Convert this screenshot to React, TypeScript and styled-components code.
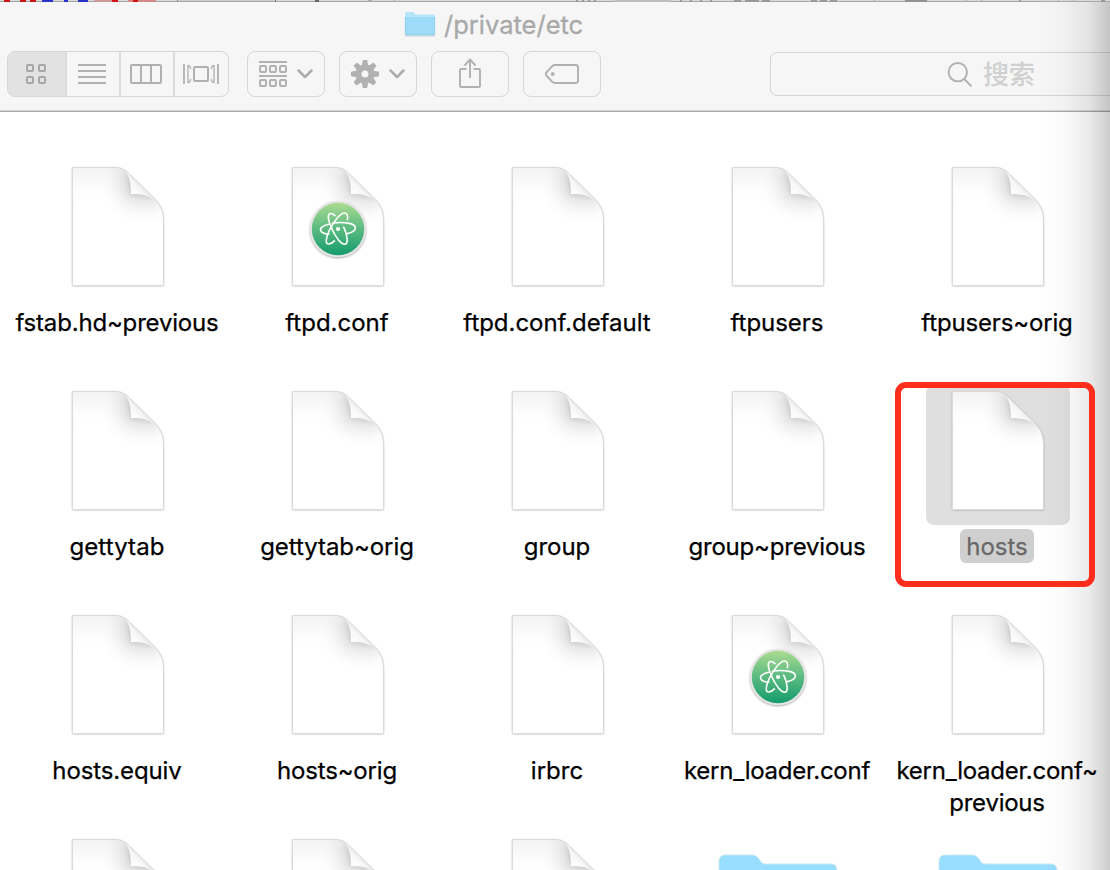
import React from 'react';
import styled, { createGlobalStyle } from 'styled-components';

const GlobalStyle = createGlobalStyle`
  * { box-sizing: border-box; }
  body { margin: 0; background: #fff; overflow: hidden; }
  svg { display: block; flex: none; }
`;

const Window = styled.main`
  position: relative;
  width: 1110px;
  height: 870px;
  overflow: hidden;
  background: #fff;
  font-family: Inter, 'Noto Sans CJK SC', sans-serif;
`;

const EdgeShade = styled.div`
  position: absolute;
  top: 2px;
  right: 0;
  bottom: 0;
  width: 70px;
  pointer-events: none;
  background: linear-gradient(to right, rgba(0, 0, 0, 0), rgba(0, 0, 0, 0.02) 35%, rgba(0, 0, 0, 0.08) 70%, rgba(0, 0, 0, 0.2));
`;

const Header = styled.header`
  height: 110px;
  background: #f6f6f6;
  border-bottom: 1px solid #a9a9a9;
  box-shadow: inset 0 -1px 0 #d4d4d4;
`;

const TitleBar = styled.div`
  display: flex;
  align-items: center;
  height: 43px;
  padding: 1px 0 0 404px;
  gap: 8px;
`;

const Title = styled.h1`
  margin: 2px 0 0;
  font-size: 25.5px;
  font-weight: 400;
  line-height: 42px;
  letter-spacing: 0;
  color: #a9a9a9;
  -webkit-text-stroke: 0.3px #a9a9a9;
  white-space: nowrap;
`;

const Toolbar = styled.div`
  display: flex;
  align-items: flex-start;
  padding: 6px 0 0 7px;
`;

const Segments = styled.div`
  display: flex;
  flex: none;
  width: 222px;
  height: 46px;
  margin-right: 18px;
  border: 1px solid #d6d6d6;
  border-radius: 8px;
  overflow: hidden;
`;

const Segment = styled.div<{ $width: number; $active?: boolean }>`
  display: flex;
  align-items: center;
  justify-content: center;
  flex: none;
  width: ${p => p.$width}px;
  padding-right: 2px;
  background: ${p => (p.$active ? '#e2e2e2' : 'transparent')};
  & + & { border-left: 2px solid #dcdcdc; padding-right: 2px; }
  & + &:last-child { padding: 0 0 0 2px; }
`;

const ToolButton = styled.div`
  display: flex;
  align-items: center;
  justify-content: center;
  flex: none;
  width: 78px;
  height: 46px;
  margin-right: 14px;
  border: 1px solid #d6d6d6;
  border-radius: 8px;
`;

const SearchField = styled.div`
  display: flex;
  align-items: center;
  gap: 10px;
  width: 360px;
  height: 44px;
  margin: 1px 0 0 155px;
  padding-left: 176px;
  border: 1px solid #d4d4d4;
  border-radius: 7px;
  flex: none;
  font-size: 26px;
  line-height: 38px;
  font-weight: 500;
  color: #d0d0d0;
`;

const SearchLabel = styled.span`
  margin-top: 1px;
`;

const Files = styled.section`
  display: grid;
  grid-template-columns: repeat(5, 220px);
  grid-auto-rows: 224px;
  padding: 49px 0 0 7px;
`;

const File = styled.article`
  display: flex;
  flex-direction: column;
  align-items: center;
`;

const Thumb = styled.div<{ $selected?: boolean }>`
  display: flex;
  justify-content: center;
  width: 144px;
  height: 140px;
  margin-left: 2px;
  padding-top: 4px;
  border-radius: 8px;
  background: ${p => (p.$selected ? '#dfdfdf' : 'transparent')};
`;

const Name = styled.div<{ $selected?: boolean; $spacing: number }>`
  margin-top: 4px;
  padding: 2px 6px 0;
  border-radius: 6px;
  font-size: 24px;
  font-weight: 400;
  line-height: 32px;
  text-align: center;
  white-space: pre;
  letter-spacing: ${p => p.$spacing}px;
  color: ${p => (p.$selected ? '#686868' : '#000')};
  -webkit-text-stroke: 0.25px currentColor;
  background: ${p => (p.$selected ? '#cfcfcf' : 'transparent')};
`;

const Highlight = styled.div`
  position: absolute;
  left: 895px;
  top: 382px;
  width: 200px;
  height: 205px;
  border: 6px solid #ff2d1c;
  border-radius: 11px;
`;

const Gap = styled.span`
  width: 10px;
`;

const FolderSpot = styled.div`
  margin-top: 16px;
`;

const PAPER = 'M2.5 2.5H44C52 2.5 55 5 58.5 8.5L85 34.5C91 40.5 93.5 47 93.5 56V120.5H2.5Z';
const CURL = 'M53 4.5C60 10 61 19 61 29C72 29 81 30.5 88 38L85 34.5L58.5 8.5Z';

const Defs = () => (
  <svg width="0" height="0" style={{ position: 'absolute' }}>
    <defs>
      <clipPath id="paper">
        <path d={PAPER} />
      </clipPath>
      <linearGradient id="sheen" x1="0" y1="0" x2="0" y2="1">
        <stop offset="0" stopColor="#f3f3f3" />
        <stop offset=".17" stopColor="#fcfcfc" />
        <stop offset=".3" stopColor="#fff" />
      </linearGradient>
      <linearGradient id="curl" x1="61" y1="29" x2="71" y2="19" gradientUnits="userSpaceOnUse">
        <stop offset="0" stopColor="#fff" />
        <stop offset=".6" stopColor="#f8f8f8" />
        <stop offset="1" stopColor="#ececec" />
      </linearGradient>
      <linearGradient id="atom" x1="0" y1="0" x2="0" y2="1">
        <stop offset="0" stopColor="#acdb91" />
        <stop offset=".45" stopColor="#62bd83" />
        <stop offset="1" stopColor="#149b6c" />
      </linearGradient>
      <filter id="wide" x="-100%" y="-100%" width="300%" height="300%" colorInterpolationFilters="sRGB"><feGaussianBlur stdDeviation="9" /></filter>
      <filter id="tight" x="-50%" y="-50%" width="200%" height="200%" colorInterpolationFilters="sRGB"><feGaussianBlur stdDeviation="3.2" /></filter>
      <filter id="drop" x="-10%" y="-10%" width="120%" height="120%"><feGaussianBlur stdDeviation="1" /></filter>
    </defs>
  </svg>
);

const Paper = ({ atom }: { atom?: boolean }) => (
  <svg width="96" height="124" viewBox="0 0 96 124">
    <path d={PAPER} transform="translate(0 .6)" fill="#000" opacity=".32" filter="url(#drop)" />
    <path d={PAPER} fill="url(#sheen)" />
    <g clipPath="url(#paper)">
      <path d={CURL} fill="#000" stroke="#000" strokeWidth="20" opacity=".12" filter="url(#wide)" />
      <path d={CURL} fill="#000" opacity=".17" filter="url(#tight)" />
    </g>
    <path d={CURL} fill="url(#curl)" />
    <path d={PAPER} fill="none" stroke="#dadada" strokeWidth="1" />
    {atom && (
      <g transform="translate(48 64)">
        <circle cy="1.2" r="28" fill="#000" opacity=".35" filter="url(#drop)" />
        <circle r="28.3" fill="#e5e5e6" />
        <circle r="26.2" fill="url(#atom)" />
        <g fill="none" stroke="#fff" strokeWidth="1.6" strokeLinecap="round">
          <path d="M-9.2 -4.7C-15 -3.5 -18.3 -1 -17.3 1.6C-16.3 4 -12.5 5 -9.3 5.3M-5.5 -5.8C5 -7.5 18.3 -6 17.3 -.7C16.8 1.8 13.5 3.6 9.5 4.6" />
          <path d="M-5.8 .5C-8.8 -6 -11.8 -14 -7.6 -15.4C-6.2 -15.8 -4.5 -14.8 -3.1 -13.4M-5.8 .5C-2.5 8 3.6 16 7.3 15.2C10.5 14.2 9.3 5.5 5.7 -1.8" />
          <path d="M9.4 -9.3C10 -13 9.3 -15.6 7 -16C2.8 -17 -4.8 -7 -8.7 1.5C-12 8.8 -13 14.5 -9.8 15C-7.5 15.2 -5.3 13.8 -3.6 11.9" />
        </g>
        <circle r="2.1" fill="#fff" />
      </g>
    )}
  </svg>
);

const Folder = () => (
  <svg width="122" height="104" viewBox="0 0 122 104">
    <path d="M2 9Q2 2 8 2H35Q39 2 41 5L45 10Q46 11 49 11H114Q120 11 120 18V96Q120 100 116 100H6Q2 100 2 96Z" fill="#98deff" stroke="#c9e7f3" strokeWidth="1" />
    <path d="M2 17H120V98H2Z" fill="#7acbf7" />
  </svg>
);

const TitleFolder = () => (
  <svg width="32" height="28" viewBox="0 0 32 28">
    <path d="M1 25.8H31" stroke="#cbd4d8" strokeWidth="1.5" />
    <path d="M1 3.5Q1 2 2.5 2H8.5Q9.5 2 10.5 3.2L11.5 4.5H29.5Q31 4.5 31 6V24Q31 25.3 29.5 25.3H2.5Q1 25.3 1 24Z" fill="#b6e5fa" />
    <path d="M1 7H31V24Q31 25 30 25H2Q1 25 1 24Z" fill="#9edbf8" />
    <path d="M1.3 7V24.5H30.7V7" fill="none" stroke="#8dcce9" strokeWidth=".8" />
  </svg>
);

const Chevron = () => (
  <svg width="16" height="10" viewBox="0 0 16 10"><path d="M1.5 1.5L8 8L14.5 1.5" fill="none" stroke="#acacac" strokeWidth="2.5" strokeLinecap="round" strokeLinejoin="round" /></svg>
);

const GridIcon = () => (
  <svg width="20" height="20" viewBox="0 0 20 20" fill="none" stroke="#a6a6a6" strokeWidth="2">
    {[1, 13].map(x => [1, 13].map(y => <rect key={`${x}-${y}`} x={x} y={y} width="6" height="6" rx="1" />))}
  </svg>
);

const ListIcon = () => (
  <svg width="28" height="20" viewBox="0 0 28 20"><path d="M0 1H28M0 7H28M0 13H28M0 19H28" stroke="#b1b1b1" strokeWidth="2" /></svg>
);

const ColumnsIcon = () => (
  <svg width="32" height="20" viewBox="0 0 32 20" fill="none" stroke="#b1b1b1" strokeWidth="2"><rect x="1" y="1" width="30" height="18" rx="1" /><path d="M11 1V19M21 1V19" /></svg>
);

const CoverIcon = () => (
  <svg width="36" height="20" viewBox="0 0 36 20" fill="none" stroke="#b1b1b1" strokeWidth="2">
    <rect x="11" y="3" width="14" height="14" rx="1" />
    <path d="M1 0V20M35 0V20" strokeWidth="1.8" />
    <path d="M5 1V19M31 1V19M5.5 1L7.5 3.5V5M5.5 19L7.5 16.5V15M30.5 1L28.5 3.5V5M30.5 19L28.5 16.5V15" strokeWidth="1.3" />
  </svg>
);

const GroupIcon = () => (
  <svg width="28" height="26" viewBox="0 0 28 26" fill="none" stroke="#b1b1b1" strokeWidth="2">
    <path d="M0 1H28M0 15H28" />
    {[1, 11, 21].map(x => [5, 19].map(y => <rect key={`${x}-${y}`} x={x} y={y} width="6" height="6" rx="1" />))}
  </svg>
);

const GearIcon = () => (
  <svg width="28" height="28" viewBox="-14 -14 28 28">
    {[0, 45, 90, 135, 180, 225, 270, 315].map(a => <path key={a} d="M-3.2 -8L-2.4 -13.2Q-2.3 -14 -1.5 -14H1.5Q2.3 -14 2.4 -13.2L3.2 -8Z" fill="#b1b1b1" transform={`rotate(${a})`} />)}
    <circle r="6.5" fill="none" stroke="#b1b1b1" strokeWidth="6" />
  </svg>
);

const ShareIcon = () => (
  <svg width="24" height="32" viewBox="0 0 24 32" fill="none" stroke="#b1b1b1" strokeWidth="1.9" strokeLinejoin="round">
    <path d="M8.5 11H3Q2 11 2 12V28Q2 29 3 29H21Q22 29 22 28V12Q22 11 21 11H15.5M12 20V1.5M6.5 7.5L12 1.5L17.5 7.5" />
  </svg>
);

const TagIcon = () => (
  <svg width="34" height="20" viewBox="0 0 34 20">
    <path d="M10 1H30.5Q33 1 33 3.5V16.5Q33 19 30.5 19H10Q8.5 19 7.2 17.8L1 11Q0 10 1 9L7.2 2.2Q8.5 1 10 1Z" fill="none" stroke="#b1b1b1" strokeWidth="1.9" />
    <circle cx="7.7" cy="10" r="1.9" fill="#b1b1b1" />
  </svg>
);

const SearchIcon = () => (
  <svg width="26" height="25" viewBox="0 0 26 25" fill="none" stroke="#b1b1b1" strokeWidth="1.9"><circle cx="10.8" cy="10.2" r="9.2" /><path d="M17.2 17L24.6 24.4" /></svg>
);

const StripSvg = styled.svg`
  width: 1110px;
  height: 2px;
`;

const marks: [number, number, string][] = [
  [4, 6, '#cd1515'], [20, 6, '#cd1515'], [30, 6, '#cd1515'], [42, 11, '#2834c8'], [64, 4, '#2834c8'], [78, 10, '#2834c8'],
  [94, 18, '#cc9999'], [112, 6, '#cd1515'], [128, 28, '#d48888'], [133, 5, '#cd1515'], [177, 1, '#888'], [275, 1, '#777'],
  [315, 4, '#666'], [368, 4, '#aaa'], [394, 1, '#aaa'], [576, 2, '#999'], [582, 2, '#999'], [588, 2, '#999'], [594, 2, '#999'],
  [615, 56, '#bdbdbd'], [680, 2, '#999'], [690, 2, '#999'], [700, 2, '#999'], [710, 2, '#999'], [734, 7, '#999'],
  [745, 14, '#999'], [762, 8, '#999'], [811, 6, '#999'], [820, 7, '#999'], [830, 7, '#999'], [874, 1, '#aaa'],
  [905, 22, '#929292'], [966, 1, '#aaa'], [981, 1, '#aaa'], [1019, 2, '#999'], [1058, 1, '#aaa'], [1073, 1, '#aaa'], [1101, 4, '#999'],
];

/* Slice of the window behind, visible above the title bar */
const BackStrip = () => (
  <StripSvg viewBox="0 0 1110 2">
    <rect width="1110" height="2" fill="#d9d9d9" />
    <rect x="178" width="98" height="2" fill="#ccc" />
    <rect y="1" width="1110" height="1" fill="#a8a8a8" />
    {marks.map(([x, w, c]) => (
      <rect key={x} x={x} width={w} height="2" fill={c} />
    ))}
  </StripSvg>
);

type Item = { name: string; kind?: 'atom' | 'folder'; selected?: boolean; spacing?: number };

const items: Item[] = [
  { name: 'fstab.hd~previous', spacing: -0.18 },
  { name: 'ftpd.conf', kind: 'atom', spacing: 0 },
  { name: 'ftpd.conf.default', spacing: -0.03 },
  { name: 'ftpusers', spacing: -0.05 },
  { name: 'ftpusers~orig', spacing: -0.16 },
  { name: 'gettytab', spacing: 0.12 },
  { name: 'gettytab~orig', spacing: -0.06 },
  { name: 'group', spacing: 0 },
  { name: 'group~previous', spacing: -0.2 },
  { name: 'hosts', selected: true, spacing: 0 },
  { name: 'hosts.equiv', spacing: -0.12 },
  { name: 'hosts~orig', spacing: -0.17 },
  { name: 'irbrc', spacing: 0 },
  { name: 'kern_loader.conf', kind: 'atom', spacing: -0.26 },
  { name: 'kern_loader.conf~\nprevious', spacing: -0.25 },
  { name: '' }, { name: '' }, { name: '' }, { name: '', kind: 'folder' }, { name: '', kind: 'folder' },
];

export default function App() {
  return (
    <Window>
      <GlobalStyle />
      <Defs />
      <BackStrip />
      <Header>
        <TitleBar><TitleFolder /><Title>/private/etc</Title></TitleBar>
        <Toolbar>
          <Segments>
            <Segment $width={57} $active><GridIcon /></Segment>
            <Segment $width={54}><ListIcon /></Segment>
            <Segment $width={54}><ColumnsIcon /></Segment>
            <Segment $width={55}><CoverIcon /></Segment>
          </Segments>
          <ToolButton><GroupIcon /><Gap /><Chevron /></ToolButton>
          <ToolButton><GearIcon /><Gap /><Chevron /></ToolButton>
          <ToolButton><ShareIcon /></ToolButton>
          <ToolButton><TagIcon /></ToolButton>
          <SearchField><SearchIcon /><SearchLabel>搜索</SearchLabel></SearchField>
        </Toolbar>
      </Header>
      <Files>
        {items.map((f, i) => (
          <File key={i}>
            <Thumb $selected={f.selected}>
              {f.kind === 'folder' ? <FolderSpot><Folder /></FolderSpot> : <Paper atom={f.kind === 'atom'} />}
            </Thumb>
            {f.name && <Name $selected={f.selected} $spacing={f.spacing ?? 0}>{f.name}</Name>}
          </File>
        ))}
      </Files>
      <EdgeShade />
      <Highlight />
    </Window>
  );
}
